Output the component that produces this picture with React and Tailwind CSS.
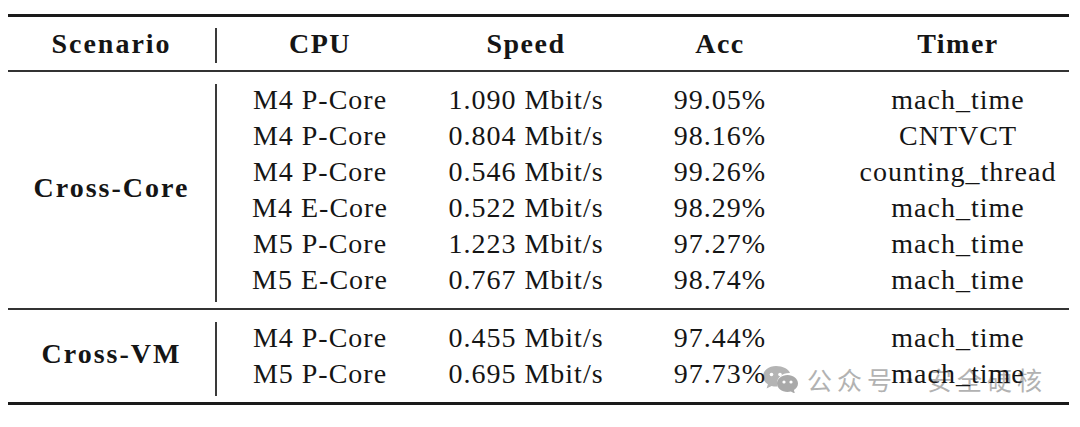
import React from 'react';

const crossCore = [
  ['M4 P-Core', '1.090 Mbit/s', '99.05%', 'mach_time'],
  ['M4 P-Core', '0.804 Mbit/s', '98.16%', 'CNTVCT'],
  ['M4 P-Core', '0.546 Mbit/s', '99.26%', 'counting_thread'],
  ['M4 E-Core', '0.522 Mbit/s', '98.29%', 'mach_time'],
  ['M5 P-Core', '1.223 Mbit/s', '97.27%', 'mach_time'],
  ['M5 E-Core', '0.767 Mbit/s', '98.74%', 'mach_time'],
];

const crossVM = [
  ['M4 P-Core', '0.455 Mbit/s', '97.44%', 'mach_time'],
  ['M5 P-Core', '0.695 Mbit/s', '97.73%', 'mach_time'],
];

const Row = ({ cells }) => (
  <div className="flex h-[36px] items-center">
    <div className="w-[204px] text-center">{cells[0]}</div>
    <div className="w-[208px] text-center">{cells[1]}</div>
    <div className="w-[180px] text-center">{cells[2]}</div>
    <div className="w-[259px] pl-[37px] text-center">{cells[3]}</div>
  </div>
);

const Group = ({ label, rows }) => (
  <div className="flex">
    <div className="flex w-[207px] items-center justify-center pb-[4px] font-bold tracking-[2px]">{label}</div>
    <div className="flex w-[3px] pt-[12px] pb-[6px]">
      <div className="w-[2px] bg-[#3a3a3a]" />
    </div>
    <div className="py-[10px]">
      {rows.map((r, i) => (
        <Row key={i} cells={r} />
      ))}
    </div>
  </div>
);

const WeChatIcon = () => (
  <svg width="36" height="28" viewBox="0 0 36 28">
    <path d="M14 1C6.8 1 1 5.6 1 11.3c0 3.3 1.9 6.1 4.9 8L4.6 23.5l5-2.6c1.4.4 2.9.6 4.4.6.5 0 1 0 1.5-.1-.3-1-.5-2-.5-3 0-5.8 5.4-10.4 12.1-10.4h.9C26.6 4 20.8 1 14 1z" fill="#b4b4b4" />
    <circle cx="9.5" cy="9.5" r="1.8" fill="#fff" />
    <circle cx="18" cy="9.5" r="1.8" fill="#fff" />
    <path d="M25.5 10C19.7 10 15 13.8 15 18.6c0 4.7 4.7 8.5 10.5 8.5 1.2 0 2.3-.2 3.4-.5l4 2-1-3.5C34.3 23.5 36 21.2 36 18.6 36 13.8 31.3 10 25.5 10z" fill="#a9a9a9" />
    <circle cx="22" cy="17" r="1.6" fill="#fff" />
    <circle cx="29" cy="17" r="1.6" fill="#fff" />
  </svg>
);

export default function App() {
  return (
    <div className="relative h-[427px] w-[1080px] overflow-hidden bg-white pt-[14px] pl-[8px] font-['Liberation_Serif','Times_New_Roman',serif] text-[28px] text-[#151515]">
      <div className="absolute left-[762px] top-[365px] z-0 flex items-center gap-[9px]">
        <WeChatIcon />
        <span className="font-['Noto_Sans_CJK_SC','Noto_Sans',sans-serif] text-[25px] leading-none tracking-[5px] text-[#b2b2b2]">
          公众号·安全硬核
        </span>
      </div>

      <div className="relative z-10 w-[1061px] tracking-[1px]">
        <div className="h-[3px] bg-[#1a1a1a]" />
        <div className="flex h-[53px] font-bold">
          <div className="flex w-[207px] items-center justify-center tracking-[2px]">Scenario</div>
          <div className="flex w-[3px] pt-[11px] pb-[7px]">
            <div className="w-[2px] bg-[#3a3a3a]" />
          </div>
          <div className="flex items-center tracking-[1.5px]">
            <div className="w-[204px] text-center">CPU</div>
            <div className="w-[208px] text-center">Speed</div>
            <div className="w-[180px] text-center">Acc</div>
            <div className="w-[259px] pl-[37px] text-center">Timer</div>
          </div>
        </div>
        <div className="h-[2px] bg-[#333]" />
        <Group label="Cross-Core" rows={crossCore} />
        <div className="h-[2px] bg-[#333]" />
        <Group label="Cross-VM" rows={crossVM} />
        <div className="h-[3px] bg-[#1a1a1a]" />
      </div>
    </div>
  );
}
